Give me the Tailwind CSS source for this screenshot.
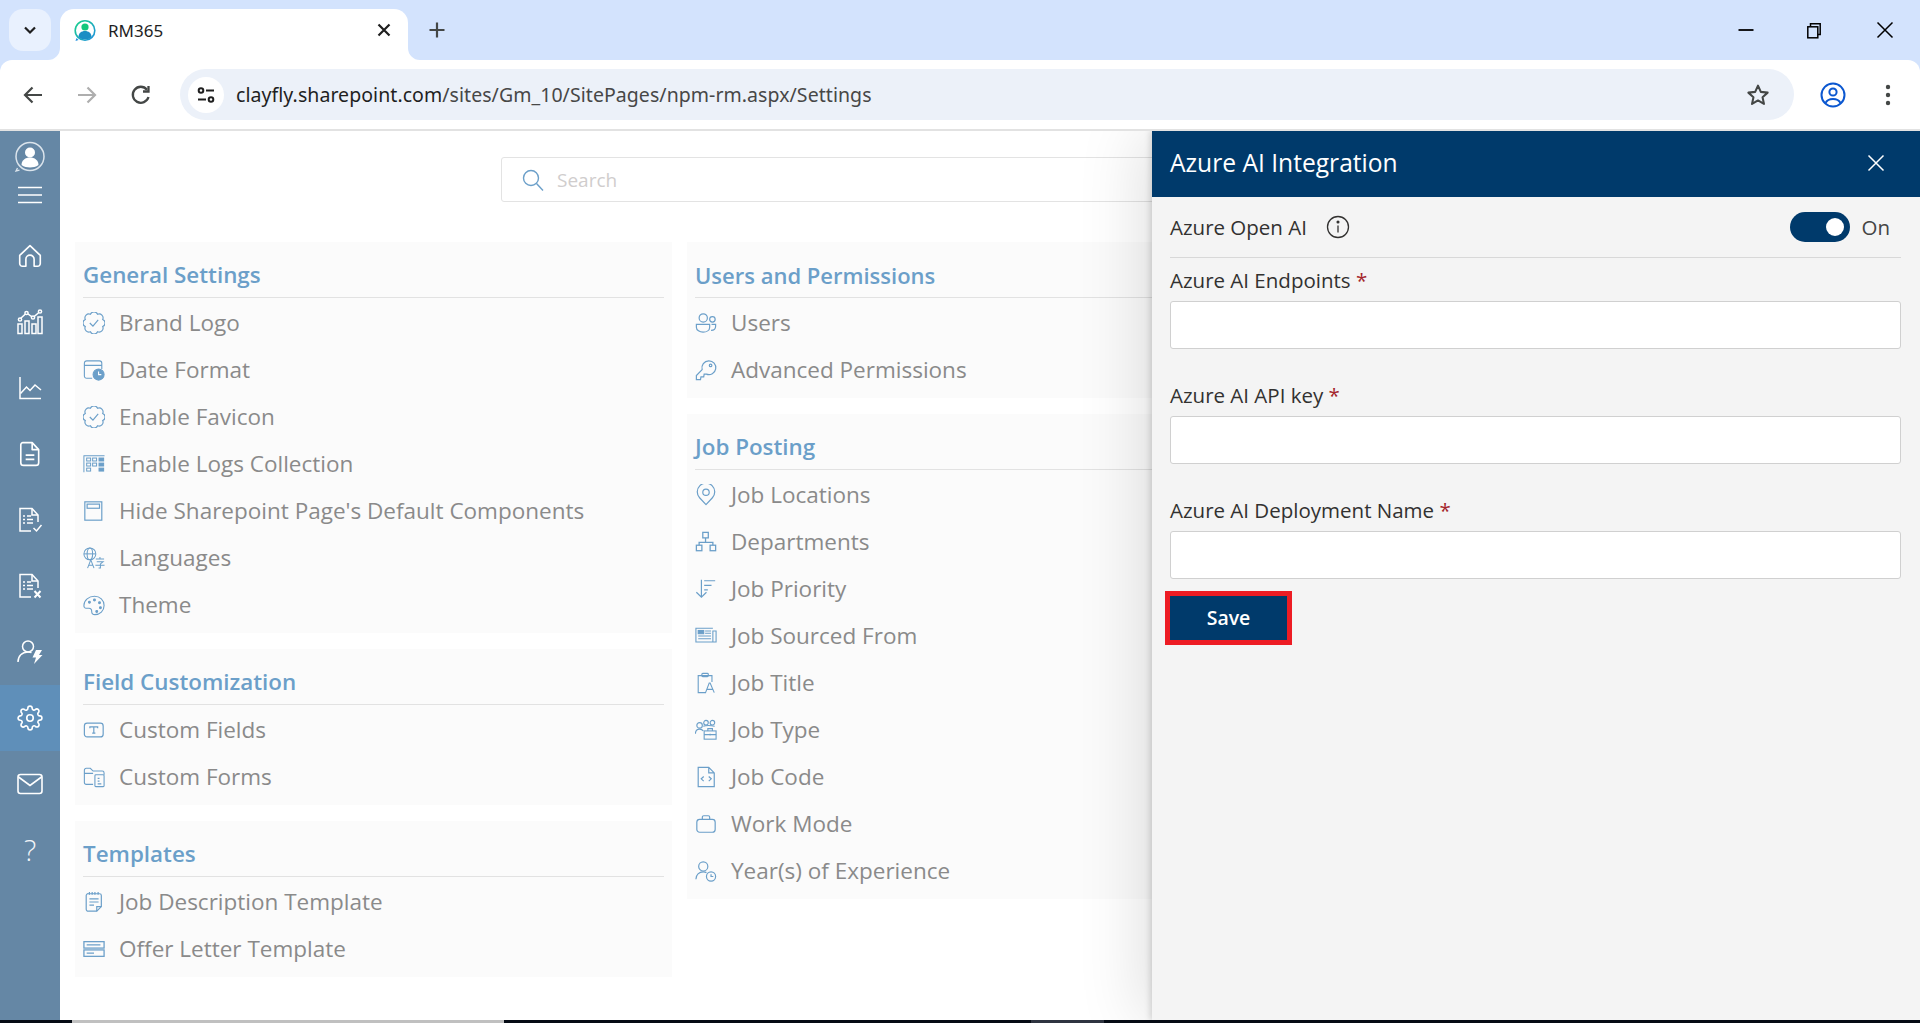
<!doctype html>
<html lang="en">
<head>
<meta charset="utf-8">
<title>RM365</title>
<script src="https://cdn.jsdelivr.net/npm/@tailwindcss/browser@4"></script>
</head>
<body class="w-[1920px] h-[1023px] overflow-hidden bg-white font-['Open_Sans',sans-serif]">
<div class="flex flex-col h-[1023px]">

  <!-- tab strip -->
  <div class="relative h-[60px] shrink-0 bg-[#d3e3fd] flex items-start">
    <div class="mt-[9px] ml-[9px] w-[42px] h-[42px] rounded-[14px] bg-[#e9f1fe] flex items-center justify-center">
      <svg class="w-[16px] h-[16px]" viewBox="0 0 16 16" fill="none" stroke="#1f1f1f" stroke-width="2.2"><path d="M3 5.500l5 5 5-5"/></svg>
    </div>
    <div class="relative mt-[9px] ml-[9px] w-[348px] h-[51px] pb-[7px] bg-white rounded-t-[14px] flex items-center">
      <svg class="absolute left-[-12px] bottom-0 w-[12px] h-[12px]" viewBox="0 0 12 12"><path d="M12 0V12H0A12 12 0 0 0 12 0Z" fill="#fff"/></svg>
      <svg class="absolute right-[-12px] bottom-0 w-[12px] h-[12px]" viewBox="0 0 12 12"><path d="M0 0V12H12A12 12 0 0 1 0 0Z" fill="#fff"/></svg>
      <svg class="ml-[13px] w-[24px] h-[24px] shrink-0" viewBox="0 0 24 24" fill="none">
        <defs><linearGradient id="fav" x1="0" y1="0" x2="1" y2="1"><stop offset="0" stop-color="#19d38a"/><stop offset="1" stop-color="#1f8fe0"/></linearGradient></defs>
        <circle cx="12" cy="11.500" r="9.800" stroke="url(#fav)" stroke-width="1.600"/>
        <path d="M3.500 19l-1 3 3-1z" fill="#1f8fe0"/>
        <circle cx="12" cy="8" r="3.600" fill="#12c77c"/>
        <path d="M5.500 18c0-4 3-6 6.500-6s6.500 2 6.500 6c-2 1.800-4.200 2.500-6.500 2.500s-4.500-.7-6.500-2.500z" fill="#1b8ec4"/>
      </svg>
      <span class="ml-[11px] text-[17px] leading-[20px] text-[#1f1f1f] font-['Noto_Sans',sans-serif]">RM365</span>
      <svg class="absolute left-[314px] top-[11px] w-[20px] h-[20px]" viewBox="0 0 20 20" stroke="#1f1f1f" stroke-width="2.200" fill="none"><path d="M4.500 4.500l11 11M15.500 4.500l-11 11"/></svg>
    </div>
    <svg class="ml-[18px] mt-[19px] w-[22px] h-[22px]" viewBox="0 0 22 22" stroke="#444746" stroke-width="2.200" fill="none"><path d="M11 3.500v15M3.500 11h15"/></svg>
    <div class="ml-auto flex items-start">
      <svg class="mt-[21px] mr-[50px] w-[18px] h-[18px]" viewBox="0 0 18 18" stroke="#000" stroke-width="1.800" fill="none"><path d="M1.500 9h15"/></svg>
      <svg class="mt-[21px] mr-[52px] w-[18px] h-[18px]" viewBox="0 0 18 18" stroke="#000" stroke-width="1.500" fill="none"><rect x="2.800" y="5.800" width="10" height="11"/><path d="M5.500 5.500V2.800h9.700V13.500h-2.400"/></svg>
      <svg class="mt-[20px] mr-[25px] w-[20px] h-[20px]" viewBox="0 0 20 20" stroke="#000" stroke-width="1.500" fill="none"><path d="M2.500 2.500l15 15M17.500 2.500l-15 15"/></svg>
    </div>
  </div>

  <!-- toolbar -->
  <div class="relative h-[69px] shrink-0 bg-[#d3e3fd]">
    <div class="h-[69px] bg-white rounded-t-[12px] flex items-center">
      <svg class="ml-[21px] w-[24px] h-[24px]" viewBox="0 0 24 24" fill="none" stroke="#444746" stroke-width="2.200"><path d="M21 12H4M11.500 4.500L4 12l7.500 7.500"/></svg>
      <svg class="ml-[30px] w-[24px] h-[24px]" viewBox="0 0 24 24" fill="none" stroke="#aeaeae" stroke-width="2.200"><path d="M3 12h17M12.500 4.500L20 12l-7.500 7.500"/></svg>
      <svg class="ml-[30px] w-[24px] h-[24px]" viewBox="0 0 24 24" fill="none" stroke="#444746" stroke-width="2.300"><path d="M19.500 14a8 8 0 1 1-1.500-7.300"/><path d="M19.500 3v5.500H14" /></svg>
      <div class="ml-[27px] w-[1614px] h-[51px] rounded-[26px] bg-[#ecf1f9] flex items-center">
        <div class="ml-[8px] w-[36px] h-[36px] rounded-full bg-white flex items-center justify-center">
          <svg class="w-[22px] h-[22px]" viewBox="0 0 22 22" fill="none" stroke="#1f1f1f" stroke-width="2"><circle cx="6" cy="6.500" r="2.300"/><path d="M11 6.500h8M3 15.500h8"/><circle cx="16" cy="15.500" r="2.300"/></svg>
        </div>
        <span class="ml-[12px] text-[19.5px] leading-[26px] text-[#1f1f1f] font-['Noto_Sans',sans-serif] whitespace-nowrap tracking-[0.06px]">clayfly.sharepoint.com<span class="text-[#474747]">/sites/Gm_10/SitePages/npm-rm.aspx/Settings</span></span>
        <svg class="ml-auto mr-[23px] w-[26px] h-[26px]" viewBox="0 0 24 24" fill="none" stroke="#444746" stroke-width="1.900"><path d="M12 3.300l2.600 5.800 6.300.7-4.700 4.200 1.300 6.200L12 17l-5.500 3.200 1.300-6.200-4.700-4.200 6.300-.7z" stroke-linejoin="round"/></svg>
      </div>
      <svg class="ml-[25px] w-[28px] h-[28px]" viewBox="0 0 28 28" fill="none" stroke="#0b57d0" stroke-width="2"><circle cx="14" cy="14" r="11.500"/><circle cx="14" cy="11" r="3.600"/><path d="M6.500 22c1.500-3 4.500-4 7.500-4s6 1 7.500 4"/></svg>
      <svg class="ml-[38px] w-[6px] h-[24px]" viewBox="0 0 6 24" fill="#444746"><circle cx="3" cy="4" r="2.200"/><circle cx="3" cy="12" r="2.200"/><circle cx="3" cy="20" r="2.200"/></svg>
    </div>
  </div>
  <div class="h-[2px] shrink-0 bg-[#e2e2e2]"></div>

  <!-- page -->
  <div class="relative flex-1 flex min-h-0 overflow-hidden">
    <!-- sidebar -->
    <aside class="w-[60px] shrink-0 bg-[#6587a5] flex flex-col items-center">
      <svg class="mt-[10px] w-[32px] h-[32px]" viewBox="0 0 32 32" fill="none">
        <circle cx="16" cy="15.500" r="14" stroke="#dbe4ec" stroke-width="1.500"/>
        <path d="M3.500 27l-1.500 3 3.500-.8" stroke="#dbe4ec" stroke-width="1.300"/>
        <circle cx="16" cy="11.500" r="5" fill="#fff"/>
        <path d="M7.500 24c0-5 4-7.500 8.500-7.500s8.500 2.500 8.500 7.500c-2.500 1.800-5.500 2.500-8.500 2.500s-6-.7-8.500-2.500z" fill="#fff"/>
      </svg>
      <svg class="mt-[13px] mb-[19px] w-[24px] h-[18px]" viewBox="0 0 24 18" stroke="#fff" stroke-width="1.500"><path d="M0 1.500h24M0 9h24M0 16.500h24"/></svg>
      <div class="w-full h-[66px] flex items-center justify-center">
        <svg class="w-[26px] h-[26px]" viewBox="0 0 24 24" fill="none" stroke="#fff" stroke-width="1.500" stroke-linejoin="round"><path d="M2.500 11.500L12 2.500l9.500 9V19a2.500 2.500 0 0 1-2.500 2.500h-3.200V15a3.800 3.800 0 0 0-7.600 0v6.500H5A2.500 2.500 0 0 1 2.500 19z"/></svg>
      </div>
      <div class="w-full h-[66px] flex items-center justify-center">
        <svg class="w-[26px] h-[26px]" viewBox="0 0 26 26" fill="none" stroke="#fff" stroke-width="1.500"><rect x="1" y="15" width="4" height="9.500"/><rect x="8" y="12" width="4" height="12.500"/><rect x="15" y="15" width="4" height="9.500"/><rect x="21" y="8" width="4" height="16.500"/><path d="M3 10l6.500-6 6.500 4.500L23 2.500"/><circle cx="3" cy="10.500" r="1.600" fill="#6587a5"/><circle cx="9.500" cy="4" r="1.600" fill="#6587a5"/><circle cx="16" cy="8.500" r="1.600" fill="#6587a5"/><circle cx="23" cy="2.500" r="1.600" fill="#6587a5"/></svg>
      </div>
      <div class="w-full h-[66px] flex items-center justify-center">
        <svg class="w-[26px] h-[26px]" viewBox="0 0 26 26" fill="none" stroke="#fff" stroke-width="1.500"><path d="M3 2v21.500h21"/><path d="M3.500 18.500l6-6.500 3.500 3.500 5-5.500 6 5"/></svg>
      </div>
      <div class="w-full h-[66px] flex items-center justify-center">
        <svg class="w-[26px] h-[26px]" viewBox="0 0 24 24" fill="none" stroke="#fff" stroke-width="1.500" stroke-linejoin="round"><path d="M5.500 1.500H14l6 6.500v12a2.500 2.500 0 0 1-2.500 2.500H6A2.500 2.500 0 0 1 3.500 20V3.500a2 2 0 0 1 2-2z"/><path d="M14 1.500V8h6M8 13h8M8 17h8"/></svg>
      </div>
      <div class="w-full h-[66px] flex items-center justify-center">
        <svg class="w-[26px] h-[26px]" viewBox="0 0 26 26" fill="none" stroke="#fff" stroke-width="1.500"><path d="M14 24H3V1.500h12l6 6.500v7"/><path d="M15 1.500V8h6"/><path d="M6 9h2M10 9h4M6 12.500h2M10 12.500h6M6 16h2M10 16h6" stroke-width="1.700"/><path d="M16.500 21l3 3 5-6"/></svg>
      </div>
      <div class="w-full h-[66px] flex items-center justify-center">
        <svg class="w-[26px] h-[26px]" viewBox="0 0 26 26" fill="none" stroke="#fff" stroke-width="1.500"><path d="M14 24H3V1.500h12l6 6.500v7"/><path d="M15 1.500V8h6"/><path d="M6 9h2M10 9h4M6 12.500h2M10 12.500h6M6 16h2M10 16h6" stroke-width="1.700"/><path d="M17.500 18l6 6.500M23.500 18l-6 6.500" stroke-width="2"/></svg>
      </div>
      <div class="w-full h-[66px] flex items-center justify-center">
        <svg class="w-[26px] h-[26px]" viewBox="0 0 26 26" fill="none" stroke="#fff" stroke-width="1.500"><circle cx="11" cy="7.500" r="5.500"/><path d="M1 23c0-6 4-10 10-10 1.500 0 2.500.2 3.500.6"/><path d="M19 11h6l-3 5h3.500L17 25l2-6.500h-3.500z" fill="#fff" stroke="none"/></svg>
      </div>
      <div class="w-full h-[66px] bg-[#5f8fb9] flex items-center justify-center">
        <svg class="w-[26px] h-[26px]" viewBox="0 0 24 24" fill="none" stroke="#fff" stroke-width="1.500"><circle cx="12" cy="12" r="3"/><path d="M19.400 15a1.650 1.650 0 0 0 .33 1.820l.06.06a2 2 0 0 1 0 2.830 2 2 0 0 1-2.830 0l-.06-.06a1.650 1.650 0 0 0-1.820-.33 1.650 1.650 0 0 0-1 1.510V21a2 2 0 0 1-2 2 2 2 0 0 1-2-2v-.09A1.650 1.650 0 0 0 9 19.400a1.650 1.650 0 0 0-1.820.33l-.06.06a2 2 0 0 1-2.830 0 2 2 0 0 1 0-2.830l.06-.06a1.650 1.650 0 0 0 .33-1.820 1.650 1.650 0 0 0-1.510-1H3a2 2 0 0 1-2-2 2 2 0 0 1 2-2h.09A1.650 1.650 0 0 0 4.600 9a1.650 1.650 0 0 0-.33-1.820l-.06-.06a2 2 0 0 1 0-2.830 2 2 0 0 1 2.830 0l.06.06a1.650 1.650 0 0 0 1.820.33H9a1.650 1.650 0 0 0 1-1.510V3a2 2 0 0 1 2-2 2 2 0 0 1 2 2v.09a1.650 1.650 0 0 0 1 1.510 1.650 1.650 0 0 0 1.820-.33l.06-.06a2 2 0 0 1 2.830 0 2 2 0 0 1 0 2.830l-.06.06a1.650 1.650 0 0 0-.33 1.820V9a1.650 1.650 0 0 0 1.510 1H21a2 2 0 0 1 2 2 2 2 0 0 1-2 2h-.09a1.650 1.650 0 0 0-1.510 1z"/></svg>
      </div>
      <div class="w-full h-[66px] flex items-center justify-center">
        <svg class="w-[26px] h-[22px]" viewBox="0 0 26 22" fill="none" stroke="#fff" stroke-width="1.600"><rect x="1" y="1.500" width="24" height="19" rx="2.500"/><path d="M1.500 4l11.500 8.500L24.500 4"/></svg>
      </div>
      <div class="w-full h-[66px] flex items-center justify-center text-[#f2f5f8] text-[29px] leading-[30px] font-light">?</div>
    </aside>

    <!-- content -->
    <main class="flex-1 min-w-0 bg-white pt-[26px]">
      <div class="ml-[441px] w-[978px] h-[45px] border border-[#e3e3e3] rounded-[3px] flex items-center">
        <svg class="ml-[19px] w-[24px] h-[24px]" viewBox="0 0 24 24" fill="none" stroke="#6b9fc9" stroke-width="1.400"><circle cx="10" cy="10" r="7.500"/><path d="M15.500 15.500L22 22.500"/></svg>
        <span class="ml-[12px] text-[19px] leading-[26px] text-[#d0cdcd]">Search</span>
      </div>
      <div class="ml-[15px] mt-[40px] flex gap-[15px] items-start">
        <!-- column 1 -->
        <div class="w-[597px] flex flex-col gap-[16px]">
          <section class="bg-[#fbfbfb] px-[8px] pb-[5px]">
            <h2 class="h-[56px] border-b border-[#e2e2e2] flex items-end pb-[7px] text-[22.4px] leading-[30px] font-semibold text-[#6b9fc9]">General Settings</h2>
            <ul class="pt-[1px] text-[22.5px] text-[#8a8a8a]">
              <li class="h-[47px] flex items-center gap-[14px]">
                <svg class="w-[22px] h-[22px] shrink-0" viewBox="1.500 1.500 21 21" fill="none" stroke="#6b9fc9" stroke-width="1.100"><path d="M15.400 3.700A3.700 3.700 0 0 1 20.300 8.600A3.700 3.700 0 0 1 20.300 15.400A3.700 3.700 0 0 1 15.400 20.300A3.700 3.700 0 0 1 8.600 20.300A3.700 3.700 0 0 1 3.700 15.400A3.700 3.700 0 0 1 3.700 8.600A3.700 3.700 0 0 1 8.600 3.700A3.700 3.700 0 0 1 15.400 3.700Z"/><path d="M8 12l3 3 5-6"/></svg>
                <span>Brand Logo</span></li>
              <li class="h-[47px] flex items-center gap-[14px]">
                <svg class="w-[22px] h-[22px] shrink-0" viewBox="0 0 24 24" fill="none" stroke="#6b9fc9" stroke-width="1.200"><path d="M10 21H4a2.500 2.500 0 0 1-2.500-2.500v-14A2.500 2.500 0 0 1 4 2h14a2.500 2.500 0 0 1 2.500 2.500V11M1.500 7h19"/><circle cx="17" cy="17" r="6" fill="#6b9fc9"/><path d="M17 13.500V17h3" stroke="#fff"/></svg>
                <span>Date Format</span></li>
              <li class="h-[47px] flex items-center gap-[14px]">
                <svg class="w-[22px] h-[22px] shrink-0" viewBox="1.500 1.500 21 21" fill="none" stroke="#6b9fc9" stroke-width="1.100"><path d="M15.400 3.700A3.700 3.700 0 0 1 20.300 8.600A3.700 3.700 0 0 1 20.300 15.400A3.700 3.700 0 0 1 15.400 20.300A3.700 3.700 0 0 1 8.600 20.300A3.700 3.700 0 0 1 3.700 15.400A3.700 3.700 0 0 1 3.700 8.600A3.700 3.700 0 0 1 8.600 3.700A3.700 3.700 0 0 1 15.400 3.700Z"/><path d="M8 12l3 3 5-6"/></svg>
                <span>Enable Favicon</span></li>
              <li class="h-[47px] flex items-center gap-[14px]">
                <svg class="w-[22px] h-[22px] shrink-0" viewBox="0 0 24 24" fill="none" stroke="#6b9fc9" stroke-width="1.100"><path d="M.5 3h23M1 3v18"/><rect x="4" y="5.500" width="4.300" height="3.200"/><rect x="10.500" y="5.500" width="4.300" height="3.200"/><rect x="17.500" y="5.500" width="5" height="3.200" fill="#6b9fc9"/><rect x="4" y="11" width="4.300" height="3.200"/><rect x="10.500" y="11" width="4.300" height="3.200"/><rect x="17.500" y="11" width="5" height="3.200" fill="#6b9fc9"/><rect x="4" y="16.500" width="4.300" height="3.200"/><rect x="17.500" y="16.500" width="5" height="3.200" fill="#6b9fc9"/></svg>
                <span>Enable Logs Collection</span></li>
              <li class="h-[47px] flex items-center gap-[14px]">
                <svg class="w-[22px] h-[22px] shrink-0" viewBox="0 0 24 24" fill="none" stroke="#6b9fc9" stroke-width="1.300"><rect x="2" y="2" width="18.500" height="20"/><rect x="4.500" y="4.500" width="13.500" height="4.500"/></svg>
                <span>Hide Sharepoint Page's Default Components</span></li>
              <li class="h-[47px] flex items-center gap-[14px]">
                <svg class="w-[22px] h-[22px] shrink-0" viewBox="0 0 24 24" fill="none" stroke="#6b9fc9" stroke-width="1.100"><circle cx="7.500" cy="7.500" r="6.500"/><ellipse cx="7.500" cy="7.500" rx="3" ry="6.500"/><path d="M1 7.500h13"/><path d="M5 23l3.500-9 3.500 9M6.200 20h4.600"/><path d="M14 13h9M18.500 11v2M15 16h7l-3 2.500V23l-2 0M13.500 20h10"/></svg>
                <span>Languages</span></li>
              <li class="h-[47px] flex items-center gap-[14px]">
                <svg class="w-[22px] h-[22px] shrink-0" viewBox="0 0 24 24" fill="none" stroke="#6b9fc9" stroke-width="1.200"><path d="M12.500 2.500c6 0 10.500 4.200 10.500 10 0 6-4.500 10-10 10-2.500 0-3.500-1.500-3.500-3.500s-1-3.500-3-3.500H3c-1.500 0-2-1.500-2-3 0-6 5.500-10 11.500-10z"/><circle cx="7" cy="9" r="1" fill="#6b9fc9"/><circle cx="12.500" cy="6.500" r="1" fill="#6b9fc9"/><circle cx="18" cy="9.500" r="1" fill="#6b9fc9"/><circle cx="19" cy="15" r="1" fill="#6b9fc9"/><circle cx="15" cy="19" r="1" fill="#6b9fc9"/></svg>
                <span>Theme</span></li>
            </ul>
          </section>
          <section class="bg-[#fbfbfb] px-[8px] pb-[5px]">
            <h2 class="h-[56px] border-b border-[#e2e2e2] flex items-end pb-[7px] text-[22.4px] leading-[30px] font-semibold text-[#6b9fc9]">Field Customization</h2>
            <ul class="pt-[1px] text-[22.5px] text-[#8a8a8a]">
              <li class="h-[47px] flex items-center gap-[14px]">
                <svg class="w-[22px] h-[22px] shrink-0" viewBox="0 0 24 24" fill="none" stroke="#6b9fc9" stroke-width="1.300"><rect x="1.500" y="4.500" width="20.500" height="15" rx="3"/><path d="M7.500 10V8.500h8.500V10M11.800 8.500V15.500M10 15.500h3.500"/></svg>
                <span>Custom Fields</span></li>
              <li class="h-[47px] flex items-center gap-[14px]">
                <svg class="w-[22px] h-[22px] shrink-0" viewBox="0 0 24 24" fill="none" stroke="#6b9fc9" stroke-width="1.200"><path d="M11 20H3.500A2 2 0 0 1 1.500 18V4.500a2 2 0 0 1 2-2H8l3 3h10a2 2 0 0 1 2 2v2M1.500 8H11"/><rect x="13" y="9.500" width="10" height="13" rx="1"/><path d="M16 13.500h2M16 16.500h2M16 19.500h4"/></svg>
                <span>Custom Forms</span></li>
            </ul>
          </section>
          <section class="bg-[#fbfbfb] px-[8px] pb-[5px]">
            <h2 class="h-[56px] border-b border-[#e2e2e2] flex items-end pb-[7px] text-[22.4px] leading-[30px] font-semibold text-[#6b9fc9]">Templates</h2>
            <ul class="pt-[1px] text-[22.5px] text-[#8a8a8a]">
              <li class="h-[47px] flex items-center gap-[14px]">
                <svg class="w-[22px] h-[22px] shrink-0" viewBox="0 0 24 24" fill="none" stroke="#6b9fc9" stroke-width="1.300"><path d="M15 22H6a2 2 0 0 1-2.500-2V5A2 2 0 0 1 6 3h12a2 2 0 0 1 2 2v12z"/><path d="M15 22v-5h5M7 1v3M10 1v3M13 1v3M16.500 1v3M7 8.500h10M7 12h10M7 15.500h5"/></svg>
                <span>Job Description Template</span></li>
              <li class="h-[47px] flex items-center gap-[14px]">
                <svg class="w-[22px] h-[22px] shrink-0" viewBox="0 0 24 24" fill="none" stroke="#6b9fc9" stroke-width="1.400"><rect x="1" y="4" width="22" height="7"/><rect x="1" y="13" width="22" height="7"/><path d="M4 7.500h15M4 16.500h8" stroke-width="1.500"/></svg>
                <span>Offer Letter Template</span></li>
            </ul>
          </section>
        </div>
        <!-- column 2 -->
        <div class="w-[597px] flex flex-col gap-[16px]">
          <section class="bg-[#fbfbfb] px-[8px] pb-[5px]">
            <h2 class="h-[56px] border-b border-[#e2e2e2] flex items-end pb-[7px] text-[22px] leading-[30px] font-semibold text-[#6b9fc9]">Users and Permissions</h2>
            <ul class="pt-[1px] text-[22.5px] text-[#8a8a8a]">
              <li class="h-[47px] flex items-center gap-[14px]">
                <svg class="w-[22px] h-[22px] shrink-0" viewBox="0 0 24 24" fill="none" stroke="#6b9fc9" stroke-width="1.300"><circle cx="9" cy="6.500" r="4.500"/><circle cx="19" cy="8" r="3"/><path d="M1.500 13.500h14.500v3c0 3.500-3.500 5.500-7.200 5.500s-7.300-2-7.300-5.500z"/><path d="M18 13.500h4.500v2c0 3-2.500 4.500-5 4.500"/></svg>
                <span>Users</span></li>
              <li class="h-[47px] flex items-center gap-[14px]">
                <svg class="w-[22px] h-[22px] shrink-0" viewBox="0 0 24 24" fill="none" stroke="#6b9fc9" stroke-width="1.300"><path d="M15 2a7.500 7.500 0 0 0-7.200 9.500L1.500 18v4.500h4.500l.5-3h3l.5-3h2.500A7.500 7.500 0 1 0 15 2z"/><circle cx="17" cy="7" r="1.400"/></svg>
                <span>Advanced Permissions</span></li>
            </ul>
          </section>
          <section class="bg-[#fbfbfb] px-[8px] pb-[5px]">
            <h2 class="h-[56px] border-b border-[#e2e2e2] flex items-end pb-[7px] text-[22.4px] leading-[30px] font-semibold text-[#6b9fc9]">Job Posting</h2>
            <ul class="pt-[1px] text-[22.5px] text-[#8a8a8a]">
              <li class="h-[47px] flex items-center gap-[14px]">
                <svg class="w-[22px] h-[22px] shrink-0" viewBox="0 0 24 24" fill="none" stroke="#6b9fc9" stroke-width="1.300"><path d="M12 22.500L5 15a9.500 9.500 0 1 1 14 0z" stroke-linejoin="round"/><circle cx="12" cy="9" r="3.500"/></svg>
                <span>Job Locations</span></li>
              <li class="h-[47px] flex items-center gap-[14px]">
                <svg class="w-[22px] h-[22px] shrink-0" viewBox="0 0 24 24" fill="none" stroke="#6b9fc9" stroke-width="1.400"><rect x="8.500" y="1.500" width="6" height="6"/><rect x="1.500" y="15.500" width="6" height="6"/><rect x="16.500" y="15.500" width="6" height="6"/><path d="M11.500 7.500v5M4.500 15.500v-3h15v3"/></svg>
                <span>Departments</span></li>
              <li class="h-[47px] flex items-center gap-[14px]">
                <svg class="w-[22px] h-[22px] shrink-0" viewBox="0 0 24 24" fill="none" stroke="#6b9fc9" stroke-width="1.300"><path d="M7 2v19M1.500 15.500L7 21l5.500-5.500M10 3h12M10 8h8M10 13h4"/></svg>
                <span>Job Priority</span></li>
              <li class="h-[47px] flex items-center gap-[14px]">
                <svg class="w-[22px] h-[22px] shrink-0" viewBox="0 0 24 24" fill="none" stroke="#6b9fc9" stroke-width="1.200"><path d="M19.500 3.500H1v15h22v-12h-3.500v12"/><rect x="3.500" y="6" width="6" height="3.500" fill="#6b9fc9"/><path d="M11 6.500h6.500M11 9h6.500M3.500 12h14M3.500 15h14"/></svg>
                <span>Job Sourced From</span></li>
              <li class="h-[47px] flex items-center gap-[14px]">
                <svg class="w-[22px] h-[22px] shrink-0" viewBox="0 0 24 24" fill="none" stroke="#6b9fc9" stroke-width="1.200"><path d="M12 22.500H3.500V4h15v7"/><rect x="7.500" y="1.500" width="7" height="3.500" rx="1"/><path d="M11.500 22.500l4-10.500h1l4.500 10.500M13 19h6.500"/></svg>
                <span>Job Title</span></li>
              <li class="h-[47px] flex items-center gap-[14px]">
                <svg class="w-[22px] h-[22px] shrink-0" viewBox="0 0 24 24" fill="none" stroke="#6b9fc9" stroke-width="1.200"><circle cx="5" cy="7" r="3"/><circle cx="12" cy="4" r="2.500"/><circle cx="19" cy="4" r="2.500"/><path d="M.5 16c0-3 2-5 4.500-5 1.500 0 3 .5 4 2M9 8c3-1 8-1 12.500 0"/><rect x="10" y="13" width="13" height="9"/><path d="M14 13v-2.500h5V13M10 17h13M16.500 16v2"/></svg>
                <span>Job Type</span></li>
              <li class="h-[47px] flex items-center gap-[14px]">
                <svg class="w-[22px] h-[22px] shrink-0" viewBox="0 0 24 24" fill="none" stroke="#6b9fc9" stroke-width="1.300"><path d="M3.500 1.500h11.500l6 6v15H3.500zM15 1.500v6h6"/><path d="M9.500 11.500L6.800 14l2.700 2.500M15 11.500l2.700 2.500-2.700 2.500"/></svg>
                <span>Job Code</span></li>
              <li class="h-[47px] flex items-center gap-[14px]">
                <svg class="w-[22px] h-[22px] shrink-0" viewBox="0 0 24 24" fill="none" stroke="#6b9fc9" stroke-width="1.300"><rect x="2" y="7" width="20" height="14" rx="3"/><path d="M8 7V4.500A1.500 1.500 0 0 1 9.500 3h5A1.500 1.500 0 0 1 16 4.500V7"/></svg>
                <span>Work Mode</span></li>
              <li class="h-[47px] flex items-center gap-[14px]">
                <svg class="w-[22px] h-[22px] shrink-0" viewBox="0 0 24 24" fill="none" stroke="#6b9fc9" stroke-width="1.300"><circle cx="9" cy="7" r="5"/><path d="M1 21c0-5 3.500-8 8-8 1.500 0 2.500.3 3.500.8"/><circle cx="17.500" cy="18" r="5"/><path d="M17.500 15.500V18h2.500"/></svg>
                <span>Year(s) of Experience</span></li>
            </ul>
          </section>
        </div>
      </div>
    </main>

    <!-- side panel, lies over the page -->
    <div class="absolute top-0 bottom-0 right-0 w-[768px] bg-[#f4f4f4] shadow-[-2px_0_6px_rgba(0,0,0,0.14),-12px_0_60px_rgba(0,0,0,0.12)] flex flex-col">
      <div class="h-[66px] shrink-0 bg-[#003a6b] flex items-center pb-[3px] pl-[18px] pr-[35px] justify-between">
        <span class="text-[24.6px] leading-[32px] text-white">Azure AI Integration</span>
        <svg class="w-[18px] h-[18px]" viewBox="0 0 18 18" stroke="#fff" stroke-width="1.500" fill="none"><path d="M1.500 1.500l15 15M16.500 1.500l-15 15"/></svg>
      </div>
      <div class="px-[18px] pr-[19px] flex flex-col text-[#323130]">
        <div class="h-[61px] border-b border-[#d8d8d8] flex items-center">
          <span class="text-[20.5px] leading-[26px] font-medium">Azure Open AI</span>
          <svg class="ml-[19px] w-[24px] h-[24px]" viewBox="0 0 24 24" fill="none" stroke="#323130" stroke-width="1.300"><circle cx="12" cy="12" r="10.500"/><path d="M12 10.500v7"/><circle cx="12" cy="7" r=".9" fill="#323130"/></svg>
          <div class="ml-auto w-[60px] h-[30px] rounded-full bg-[#003a6b] flex items-center justify-end pr-[6px]">
            <div class="w-[18px] h-[18px] rounded-full bg-white"></div>
          </div>
          <span class="ml-[11px] mr-[11px] text-[20.5px] leading-[26px] text-[#444]">On</span>
        </div>
        <label class="mt-[9px] h-[26px] text-[20.5px] leading-[26px] font-medium">Azure AI Endpoints <span class="text-[#a4262c]">*</span></label>
        <input type="text" class="mt-[8px] h-[48px] bg-white border border-[#d0d0d0] rounded-[3px]">
        <label class="mt-[33px] h-[26px] text-[20.5px] leading-[26px] font-medium">Azure AI API key <span class="text-[#a4262c]">*</span></label>
        <input type="text" class="mt-[8px] h-[48px] bg-white border border-[#d0d0d0] rounded-[3px]">
        <label class="mt-[33px] h-[26px] text-[20.5px] leading-[26px] font-medium">Azure AI Deployment Name <span class="text-[#a4262c]">*</span></label>
        <input type="text" class="mt-[8px] h-[48px] bg-white border border-[#d0d0d0] rounded-[3px]">
        <button class="mt-[12px] -ml-[5px] w-[127px] h-[54px] bg-[#003a6b] border-[5px] border-[#ed1c24] text-white text-[19.5px] font-semibold">Save</button>
      </div>
    </div>
  </div>

  <!-- bottom sliver -->
  <div class="h-[3px] shrink-0 bg-[#050b14] flex">
    <div class="ml-[72px] w-[432px] bg-[#c0c0c0]"></div>
    <div class="ml-[527px] w-[73px] bg-[#2e3440]"></div>
  </div>
</div>
</body>
</html>
